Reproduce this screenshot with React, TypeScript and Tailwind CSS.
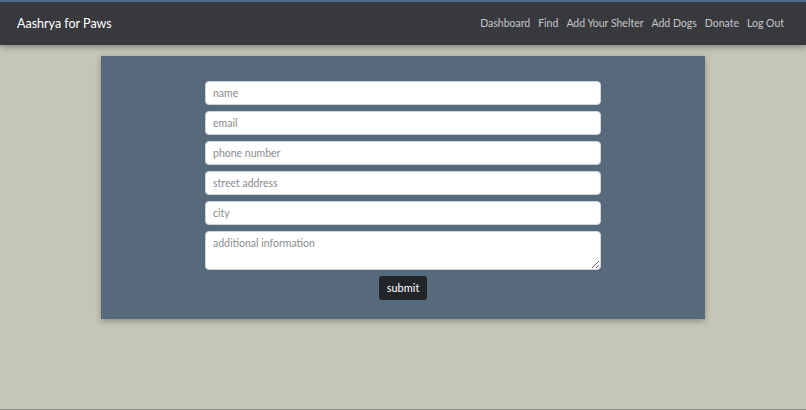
const links = ['Dashboard', 'Find', 'Add Your Shelter', 'Add Dogs', 'Donate', 'Log Out'];
const fields = ['name', 'email', 'phone number', 'street address', 'city'];

export default function App() {
  return (
    <div
      className="flex h-[410px] flex-col overflow-hidden border-b border-[#8f9085] bg-[#c5c5b8]"
      style={{ fontFamily: 'Lato, "Noto Sans", sans-serif' }}
    >
      <nav className="relative z-10 flex h-[45px] shrink-0 items-center justify-between border-t-2 border-[#4d6a88] bg-[#37393d] pl-[17px] pr-[22px] pt-[1px] shadow-[0_2px_6px_rgba(0,0,0,0.35)]">
        <span className="text-[12.5px] text-white">Aashrya for Paws</span>
        <div className="flex items-center gap-[8px]">
          {links.map((l) => (
            <a key={l} className="text-[10.5px] text-[#c4c6c8]">
              {l}
            </a>
          ))}
        </div>
      </nav>
      <main className="flex justify-center pt-[11px]">
        <div className="flex w-[604px] flex-col items-center bg-[#566a7b] pb-[19px] pt-[25px] shadow-[0_2px_6px_rgba(0,0,0,0.3)]">
          <div className="flex w-[396px] flex-col gap-[6px]">
            {fields.map((f) => (
              <input
                key={f}
                placeholder={f}
                className="h-[24px] w-full rounded-[4px] border border-[#ced4da] bg-white px-[7px] text-[10.5px] text-[#495057] placeholder:text-[#888c90]"
              />
            ))}
            <textarea
              placeholder="additional information"
              className="h-[39px] w-full rounded-[4px] border border-[#ced4da] bg-white px-[7px] pt-[4px] text-[10.5px] text-[#495057] placeholder:text-[#888c90]"
            />
          </div>
          <button className="mt-[6px] h-[24px] rounded-[3px] bg-[#212529] px-[8px] text-[11px] text-white">
            submit
          </button>
        </div>
      </main>
    </div>
  );
}
